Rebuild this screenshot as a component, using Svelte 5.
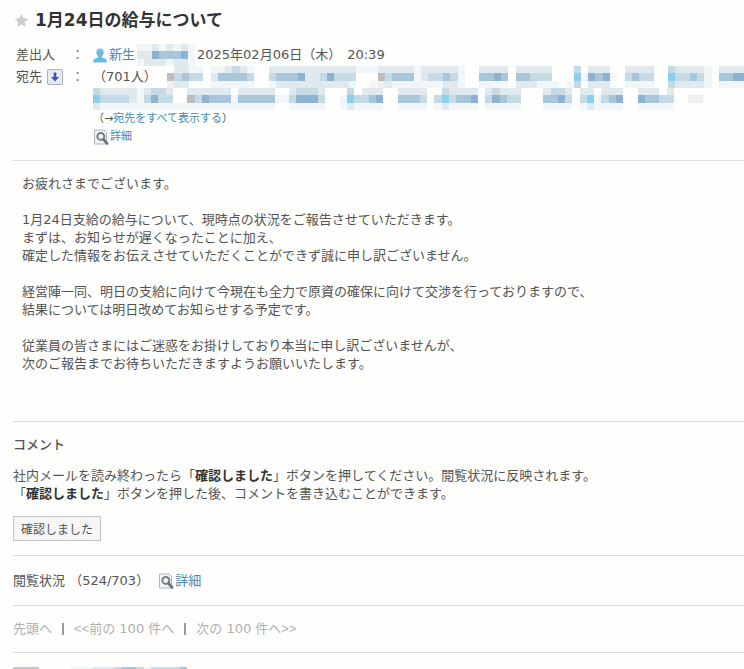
<script lang="ts">
  const palette: Record<string, string> = {
    a: '#f1f6f8',
    b: '#dfe9ee',
    c: '#c5dae5',
    d: '#a8c6d9',
    e: '#8eb3d0',
    f: '#8bcfee',
    g: '#c0bbbd',
    h: '#f0eeee',
  };

  // masked names, one character per block
  const senderMask = [
    'aabababa',
    'bbedddea',
    'abbbabba',
  ];

  const recipientMask1 = [
    '.bbaa.aabcba..bbbbbbbbbbbbaaabbbbbabbbbba..bbbb.bbbbb...c.bbb..bbbb..cbbbba.bbbb',
    'gcdcc.bddddc..cdddebbceccc...gcdddabccdca..dded.ddccc...faedea.cdcc..fccdca.ddee',
    'hbb...aaaaaa..abbbbbbbbbba..ahbaaaaaaabba..aaaa.bbbaaa.ac.bbb..aaaa..cbbbba.aaaa',
  ];

  const recipientMask2 = [
    'cbbbbbabccb..bbbbbb.bbbbb..bcccb...c.bbb..bbbb..cbbbb.bcbbb...bccb.bb.bbb..bbb.b....',
    'fccccbacecc..gcedddadddddaaceeec..afccde..dddc.cfcdde.cedcc...ddec.cfacde..eddcc..hh',
    'baaaaaaaaaaaaaaaaaaaaaaaa..aaaaa..abaaaa..aaaa.abaaaa.aaaaa...aaaa.abaaaa..aaaaa....',
  ];

  const readerMask = ['aaabbbcddcaccccd'];

  const message = [
    'お疲れさまでございます。',
    '',
    '1月24日支給の給与について、現時点の状況をご報告させていただきます。',
    'まずは、お知らせが遅くなったことに加え、',
    '確定した情報をお伝えさせていただくことができず誠に申し訳ございません。',
    '',
    '経営陣一同、明日の支給に向けて今現在も全力で原資の確保に向けて交渉を行っておりますので、',
    '結果については明日改めてお知らせする予定です。',
    '',
    '従業員の皆さまにはご迷惑をお掛けしており本当に申し訳ございませんが、',
    '次のご報告までお待ちいただきますようお願いいたします。',
  ];
</script>

{#snippet mask(rows: string[], width: number)}
  <svg
    class="mask"
    {width}
    height={rows.length === 3 ? 22 : 7}
    viewBox="0 0 {rows[0].length} {rows.length}"
    preserveAspectRatio="none"
    aria-hidden="true"
  >
    {#each rows as row, y}
      {#each row as block, x}
        {#if palette[block]}
          <rect {x} {y} width="1" height="1" fill={palette[block]} />
        {/if}
      {/each}
    {/each}
  </svg>
{/snippet}

{#snippet detailIcon()}
  <svg class="detail-icon" viewBox="0 0 16 16" aria-hidden="true">
    <path d="M1.5 1h9.500l2.500 2.500V15h-12z" fill="#f1f5f7" stroke="#a9b8c0" />
    <circle cx="7.800" cy="7.400" r="3.500" fill="#e8f2f7" stroke="#777d82" stroke-width="2" />
    <path d="M10.600 10.400l3.400 4" stroke="#6c7276" stroke-width="2.800" stroke-linecap="round" />
  </svg>
{/snippet}

<main class="mail">
  <header class="header">
    <h1 class="title">
      <svg class="star" viewBox="0 0 14 14" aria-hidden="true">
        <path
          d="M7 .8l1.900 4.200 4.600.5-3.500 3.100 1 4.500L7 10.800 3 13.100l1-4.500L.5 5.500l4.600-.5z"
          fill="#cdcdcd"
          stroke="#cdcdcd"
          stroke-linejoin="round"
        />
      </svg>
      1月24日の給与について
    </h1>

    <dl class="fields">
      <dt>差出人</dt>
      <dd class="colon">：</dd>
      <dd class="line">
        <svg class="person" viewBox="0 0 14 15" aria-hidden="true">
          <path
            d="M7 .5c2.200 0 3.700 1.500 3.700 3.800 0 1.600-.7 3-1.700 3.800v1.300l3.400 1.400c1 .5 1.300 1.200 1.300 3.700H.3c0-2.500.3-3.200 1.300-3.700L5 9.400V8.100C4 7.300 3.300 5.900 3.300 4.300 3.300 2 4.800.5 7 .5z"
            fill="#6cb9e4"
          />
          <path d="M5 3.500c.4-1.400 1.600-1.800 2.800-1.500" stroke="#b5def4" fill="none" />
        </svg>
        <a class="sender" href="#sender">新生</a>
        {@render mask(senderMask, 58)}
        <span class="date">2025年02月06日（木）</span>
        <span class="time">20:39</span>
      </dd>

      <dt class="to">
        宛先
        <button class="expand" aria-label="宛先を開く">
          <svg viewBox="0 0 14 14" aria-hidden="true">
            <path d="M5.700 2.500h2.600V7H11l-4 4.500L3 7h2.700z" fill="#4350b8" />
          </svg>
        </button>
      </dt>
      <dd class="colon">：</dd>
      <dd>
        <div class="line">
          <span class="count">（701人）</span>
          {@render mask(recipientMask1, 581)}
        </div>
        <div class="line">{@render mask(recipientMask2, 610)}</div>
        <div class="small">（→<a href="#all">宛先をすべて表示する</a>）</div>
        <a class="detail small" href="#detail">{@render detailIcon()}詳細</a>
      </dd>
    </dl>
  </header>

  <article class="body">
    {#each message as text}
      <p>{text}</p>
    {/each}
  </article>

  <section class="comment">
    <h2>コメント</h2>
    <p>社内メールを読み終わったら「<b>確認しました</b>」ボタンを押してください。閲覧状況に反映されます。</p>
    <p>「<b>確認しました</b>」ボタンを押した後、コメントを書き込むことができます。</p>
    <button class="confirm">確認しました</button>
  </section>

  <section class="status">
    <span>閲覧状況 （524/703）</span>
    <a class="detail" href="#readers">{@render detailIcon()}詳細</a>
  </section>

  <nav class="pager">
    <span>先頭へ</span>
    <i></i>
    <span><span class="arrows">&lt;&lt;</span>前の 100 件へ</span>
    <i></i>
    <span>次の 100 件へ<span class="arrows">&gt;&gt;</span></span>
  </nav>

  <section class="readers">
    <span class="photo"></span>
    {@render mask(readerMask, 116)}
  </section>
</main>

<style>
  :global(body) {
    background: #fefefd;
  }

  .mail {
    box-sizing: border-box;
    height: 100vh;
    padding: 8px 0 0 13px;
    overflow: hidden;
    font-family: 'DejaVu Sans', 'Noto Sans CJK JP', sans-serif;
    font-size: 13px;
    line-height: 18px;
    color: #545454;
  }

  h1,
  h2,
  p,
  dl,
  dd {
    margin: 0;
  }

  a {
    color: #468bb8;
    text-decoration: none;
  }

  button {
    font-family: inherit;
    cursor: pointer;
  }

  .header {
    padding-bottom: 14px;
  }

  .title {
    display: flex;
    align-items: center;
    gap: 7px;
    padding-left: 2px;
    font-size: 17px;
    line-height: 24px;
    color: #333;
  }

  .star {
    width: 13px;
    height: 13px;
  }

  .fields {
    display: grid;
    grid-template-columns: 55px 22px 1fr;
    padding: 12px 0 0 3px;
    line-height: 22px;
  }

  .fields dd {
    min-width: 0;
  }

  .fields .colon {
    color: #888;
  }

  .line {
    display: flex;
    align-items: center;
    height: 22px;
    white-space: nowrap;
    overflow: hidden;
  }

  .mask {
    display: block;
    flex: none;
    shape-rendering: crispEdges;
  }

  .person {
    width: 14px;
    height: 15px;
    margin-right: 2px;
  }

  .sender {
    margin-right: 2px;
  }

  .date {
    margin-left: 2px;
  }

  .time {
    margin-left: 6px;
  }

  .to {
    display: flex;
    gap: 5px;
  }

  .expand {
    width: 16px;
    height: 16px;
    margin-top: 3px;
    padding: 0;
    border: 1px solid #aab0c4;
    border-radius: 2px;
    background: #e6eaf4;
  }

  .expand svg {
    display: block;
    width: 14px;
    height: 14px;
  }

  .count {
    flex: none;
    width: 74px;
  }

  .small {
    font-size: 11px;
    line-height: 18px;
  }

  .detail {
    display: flex;
    align-items: center;
    gap: 1px;
  }

  .detail-icon {
    width: 16px;
    height: 16px;
  }

  .body {
    padding: 14px 9px 48px;
    border-top: 1px solid #deded9;
  }

  .body p {
    min-height: 18px;
  }

  .comment {
    padding: 14px 0;
    border-top: 1px solid #deded9;
  }

  .comment h2 {
    margin-bottom: 13px;
    font-size: 13px;
    font-weight: 500;
  }

  .comment b {
    color: #333;
  }

  .confirm {
    display: block;
    height: 25px;
    margin-top: 13px;
    padding: 0 7px;
    border: 1px solid #c4c4c4;
    background: #f6f6f5;
    font-size: 12px;
    color: #545454;
  }

  .status {
    display: flex;
    align-items: center;
    gap: 9px;
    height: 49px;
    border-top: 1px solid #deded9;
  }

  .pager {
    display: flex;
    align-items: center;
    gap: 10px;
    height: 46px;
    border-top: 1px solid #deded9;
    color: #b0b0b0;
  }

  .pager i {
    width: 2px;
    height: 12px;
    background: #999;
  }

  .arrows {
    font-family: 'Liberation Sans', sans-serif;
  }

  .readers {
    display: flex;
    gap: 32px;
    padding-top: 14px;
    border-top: 1px solid #deded9;
  }

  .photo {
    width: 26px;
    height: 26px;
    background: #c4c6c8;
  }
</style>
